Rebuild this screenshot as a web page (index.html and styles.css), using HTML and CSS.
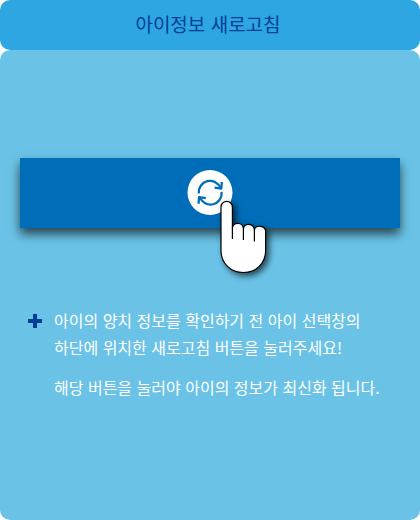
FILE: index.html
```html
<!DOCTYPE html>
<html lang="ko">
<head>
<meta charset="utf-8">
<meta name="viewport" content="width=device-width, initial-scale=1">
<title>아이정보 새로고침</title>
<link rel="stylesheet" href="styles.css">
</head>
<body>
<header class="header"><h1 class="title">아이정보 새로고침</h1></header>
<main class="panel">
  <div class="demo">
    <button class="refresh" type="button" aria-label="새로고침">
      <svg class="refresh-icon" viewBox="0 0 46 46" aria-hidden="true">
        <circle cx="23" cy="22.500" r="22.5" fill="#fff"/>
        <g fill="none" stroke="#006db8" stroke-width="2.3" stroke-linejoin="round">
          <path d="M11.800 23.500A11.300 11.300 0 0 1 33.600 18.200"/>
          <path d="M34.600 21.800A11.300 11.300 0 0 1 12.800 27.200"/>
          <path d="M27.600 17.600l6.700 1 .5-6.600"/>
          <path d="M18.800 28.100l-6.800-1-.4 6.700"/>
        </g>
      </svg>
    </button>
    <svg class="hand" viewBox="0 0 48 76" aria-hidden="true">
      <path d="M1 7a5.6 5.6 0 0 1 11.4 0V28.500C12.400 21.500 23.200 21.500 23.400 28.800C24 22.600 33.800 22.600 34.400 30C35.400 24.600 45.600 25 45.600 31.600V50.500C45.600 63.500 36 72.500 23.400 72.500C10.800 72.500 1 63.500 1 50.500Z" fill="#fff" stroke="#000" stroke-width="1.2" stroke-linejoin="round"/>
      <path d="M12.400 28v11M23.400 28.500v11.500M34.400 29.500v12" fill="none" stroke="#000" stroke-width="1.2"/>
    </svg>
  </div>
  <section class="guide">
    <svg class="plus" viewBox="0 0 14 14" aria-hidden="true"><path d="M5 0h4v5h5v4H9v5H5V9H0V5h5z" fill="#003e98"/></svg>
    <div class="copy">
      <p>아이의 양치 정보를 확인하기 전 아이 선택창의<br>하단에 위치한 새로고침 버튼을 눌러주세요!</p>
      <p>해당 버튼을 눌러야 아이의 정보가 최신화 됩니다.</p>
    </div>
  </section>
</main>
</body>
</html>
```
FILE: styles.css
```css
* {
  box-sizing: border-box;
}

body {
  display: flex;
  flex-direction: column;
  min-height: 100vh;
  margin: 0;
  background: #fff;
  font-family: "Noto Sans CJK KR", sans-serif;
}

.header {
  display: flex;
  align-items: center;
  justify-content: center;
  height: 50px;
  padding: 0 4px 2px 0;
  border-radius: 10px;
  background: #2ea6e1;
}

.title {
  margin: 0;
  color: #003e98;
  font-size: 19px;
  font-weight: 400;
  line-height: 28px;
}

.panel {
  flex: 1;
  padding: 108px 20px 40px;
  border-radius: 10px;
  background: #6ac3e7;
}

.demo {
  position: relative;
}

.refresh {
  display: flex;
  align-items: center;
  justify-content: center;
  width: 100%;
  height: 70px;
  padding: 0;
  border: 0;
  background: #006db8;
  box-shadow: 0 6px 10px rgba(0, 0, 0, 0.65);
  cursor: pointer;
}

.refresh-icon {
  width: 46px;
  height: 46px;
}

.hand {
  position: absolute;
  top: 42px;
  left: calc(50% + 10px);
  width: 48px;
  height: 76px;
  overflow: visible;
  filter: drop-shadow(3px 3px 3px rgba(0, 0, 0, 0.65));
  pointer-events: none;
}

.guide {
  display: flex;
  gap: 12px;
  margin-top: 79px;
  padding-left: 8px;
}

.plus {
  flex: none;
  width: 14px;
  height: 14px;
  margin-top: 7px;
}

.copy {
  color: #fff;
  font-size: 16px;
  line-height: 27px;
}

.copy p {
  margin: 0 0 13px;
}
```
